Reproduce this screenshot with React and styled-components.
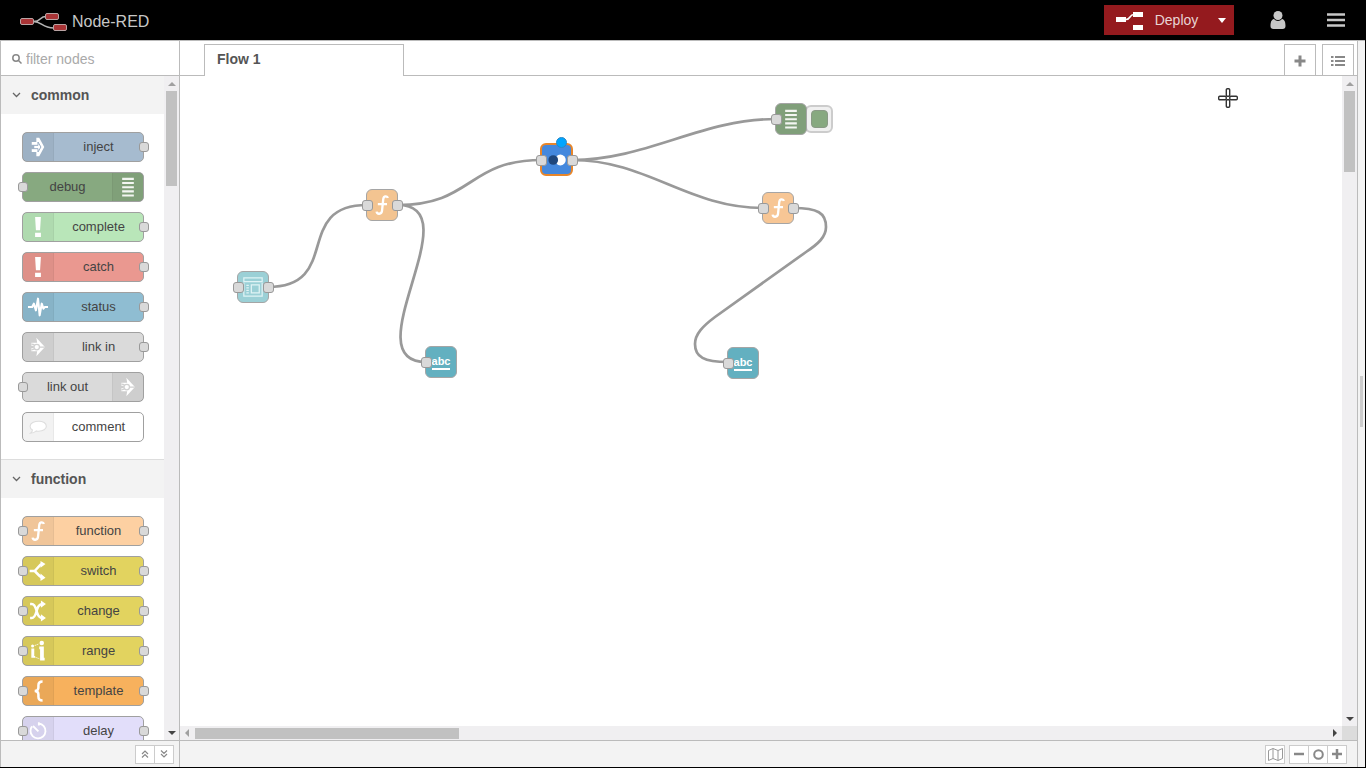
import React from 'react';
import styled, { createGlobalStyle } from 'styled-components';

const GlobalStyle = createGlobalStyle`
  *, *::before, *::after { box-sizing: border-box; }
  body { margin: 0; background: #000; }
  body, button, input { font-family: "Liberation Sans", Arial, Helvetica, sans-serif; font-size: 14px; color: #555; }
  button { padding: 0; cursor: pointer; }
  h1, h2 { margin: 0; }
  svg { display: block; }
`;

const line = '#bbb';

const Page = styled.div`
  display: flex;
  flex-direction: column;
  height: 100vh;
  padding: 0 1px 1px 0;
  background: #000;
`;

const Header = styled.header`
  flex: none;
  display: flex;
  align-items: center;
  height: 40px;
  padding: 0 19px 0 20px;
  background: #000;
`;

const Brand = styled.h1`
  display: flex;
  align-items: center;
  gap: 4px;
  flex: 1;
  padding-top: 4px;
  font-size: 16px;
  line-height: 20px;
  font-weight: normal;
  color: #c7c7c7;
`;

const DeployGroup = styled.div`
  display: flex;
  height: 30px;
  margin-right: 34px;
  background: #941a1e;
`;

const DeployButton = styled.button`
  display: flex;
  align-items: center;
  justify-content: center;
  gap: 11px;
  width: ${(p) => (p.$caret ? 24 : 106)}px;
  border: 0;
  background: transparent;
  color: #e8d4d4;
`;

const HeaderButton = styled.button`
  display: grid;
  place-items: center;
  width: 20px;
  height: 30px;
  margin-left: ${(p) => (p.$spaced ? 38 : 0)}px;
  border: 0;
  background: transparent;
`;

const Main = styled.div`
  flex: 1;
  display: flex;
  min-height: 0;
  background: #f3f3f3;
  border-top: 1px solid ${line};
`;

const Palette = styled.aside`
  flex: none;
  display: flex;
  flex-direction: column;
  width: 180px;
  border: solid ${line};
  border-width: 0 1px;
  background: #fff;
`;

const Search = styled.label`
  flex: none;
  display: flex;
  align-items: center;
  gap: 4px;
  height: 35px;
  padding: 2px 0 0 11px;
  border-bottom: 1px solid ${line};

  input {
    width: 130px;
    height: 20px;
    padding: 0;
    border: 0;
    outline: 0;
    background: transparent;
  }
  input::placeholder { color: #aaa; opacity: 1; }
`;

const PaletteBody = styled.div`
  flex: 1;
  display: flex;
  min-height: 0;
`;

const PaletteList = styled.div`
  flex: 1;
  overflow: hidden;
`;

const Category = styled.section`
  border-bottom: 1px solid #ddd;
`;

const CategoryHeader = styled.h2`
  display: flex;
  align-items: center;
  gap: 10px;
  height: 38px;
  padding-left: 11px;
  background: #f3f3f3;
  font-size: 14px;
  line-height: 20px;
`;

const NodeList = styled.div`
  display: flex;
  flex-direction: column;
  gap: 10px;
  padding: 18px 20px 17px 21px;
`;

const PaletteNode = styled.div`
  position: relative;
  display: flex;
  flex-direction: ${(p) => (p.$flip ? 'row-reverse' : 'row')};
  height: 30px;
  border: 1px solid #a0a0a0;
  border-radius: 5px;
  background: ${(p) => p.$color};
  color: #444;
  font-size: 13px;
  line-height: 28px;
  text-align: center;
`;

const IconCell = styled.span`
  display: grid;
  place-items: center;
  width: 31px;
  background: rgba(0, 0, 0, 0.05);
  border: solid rgba(0, 0, 0, 0.04);
  border-width: ${(p) => (p.$flip ? '0 0 0 1px' : '0 1px 0 0')};
`;

const NodeLabel = styled.span`
  flex: 1;
`;

const Port = styled.i`
  position: absolute;
  top: calc(50% - 5px);
  ${(p) => (p.$side === 'left' ? 'left: -5px' : 'right: -6px')};
  width: 10px;
  height: 10px;
  border: 1px solid #999;
  border-radius: 3px;
  background: #d9d9d9;
`;

const Footer = styled.footer`
  flex: none;
  display: flex;
  align-items: center;
  justify-content: flex-end;
  gap: 4px;
  height: 27px;
  padding-right: ${(p) => (p.$wide ? 10 : 5)}px;
  border-top: 1px solid ${line};
  background: #f3f3f3;
`;

const ButtonGroup = styled.div`
  display: flex;
  border: 1px solid #ccc;
  background: #fff;
  button + button { border-left: 1px solid #ccc; width: 19px; }
`;

const SmallButton = styled.button`
  display: grid;
  place-items: center;
  width: 18px;
  height: 17px;
  border: 0;
  background: #fff;
`;

const Workspace = styled.main`
  flex: 1;
  display: flex;
  flex-direction: column;
  min-width: 0;
  background: #fff;
  border-right: 1px solid ${line};
`;

const TabBar = styled.nav`
  flex: none;
  display: flex;
  align-items: flex-end;
  height: 35px;
  padding: 0 3px 0 24px;
  border-bottom: 1px solid ${line};
`;

const Tab = styled.button`
  width: 200px;
  height: 32px;
  margin: 0 auto -1px 0;
  padding: 0 0 4px 12px;
  border: 1px solid ${line};
  border-bottom: 0;
  background: #fff;
  font-weight: bold;
  text-align: left;
`;

const TabButton = styled.button`
  display: grid;
  place-items: center;
  width: 32px;
  height: 31px;
  margin-left: 6px;
  padding-top: 2px;
  border: 1px solid ${line};
  border-bottom: 0;
  background: #fff;
`;

const CanvasRow = styled.div`
  flex: 1;
  display: flex;
  min-height: 0;
`;

const Canvas = styled.div`
  position: relative;
  flex: 1;
  overflow: hidden;
  background: #fff;
`;

const Wires = styled.svg`
  position: absolute;
  inset: 0;
  width: 100%;
  height: 100%;
  fill: none;
  stroke: #999;
  stroke-width: 2.7;
`;

const FlowNode = styled.div`
  position: absolute;
  left: ${(p) => p.$x}px;
  top: ${(p) => p.$y}px;
  display: grid;
  place-items: center;
  width: ${(p) => (p.$selected ? 33 : 32)}px;
  height: ${(p) => (p.$selected ? 33 : 32)}px;
  border: ${(p) => (p.$selected ? '2px solid #e8862a' : '1px solid #a5a5a5')};
  border-radius: 6px;
  background: ${(p) => p.$color};

  ${Port} {
    width: 11px;
    height: 11px;
    ${(p) => p.$selected && 'margin: 0 -1px;'}
  }
`;

const ChangedDot = styled.i`
  position: absolute;
  top: -8px;
  right: 4px;
  width: 11px;
  height: 11px;
  border: 1px solid #2b87c4;
  border-radius: 50%;
  background: #00a5ff;
`;

const DebugToggle = styled.button`
  position: absolute;
  left: 625px;
  top: 29px;
  display: grid;
  place-items: center;
  width: 28px;
  height: 28px;
  border: 2px solid #ccc;
  border-radius: 6px;
  background: #f0f0f0;

  &::before {
    content: "";
    width: 17px;
    height: 18px;
    border: 1px solid #8a9a86;
    border-radius: 4px;
    background: #87a980;
  }
`;

const AbcIcon = styled.span`
  padding-bottom: 1px;
  border-bottom: 2px solid #fff;
  color: #fff;
  font-size: 11px;
  line-height: 12px;
  font-weight: bold;
`;

const Cursor = styled.svg`
  position: absolute;
  top: 12px;
  right: 104px;
`;

const VScroll = styled.div`
  flex: none;
  display: flex;
  flex-direction: column;
  align-items: center;
  justify-content: space-between;
  width: 15px;
  padding: 6px 0 5px;
  background: #f0eff1;
`;

const VTrack = styled.div`
  flex: 1;
  width: 11px;
  margin: 5px 0;
`;

const Thumb = styled.div`
  width: ${(p) => p.$w};
  height: ${(p) => p.$h};
  background: #c1c1c1;
`;

const HRow = styled.div`
  flex: none;
  display: flex;
  height: 14px;
`;

const HScroll = styled.div`
  flex: 1;
  display: flex;
  align-items: center;
  padding: 0 5px;
  background: #f0eff1;
`;

const HTrack = styled.div`
  flex: 1;
  margin: 0 6px;
`;

const Corner = styled.div`
  width: 15px;
  background: #dcdcdc;
`;

const arrowSides = {
  up: 'border-top: 0; border-bottom',
  down: 'border-bottom: 0; border-top',
  left: 'border-left: 0; border-right',
  right: 'border-right: 0; border-left',
};

const Arrow = styled.i`
  width: 0;
  height: 0;
  border: 4px solid transparent;
  ${(p) => arrowSides[p.$dir]}: 4px solid ${(p) => (p.$active ? '#444' : '#a0a0a0')};
`;

const Separator = styled.div`
  flex: none;
  display: grid;
  place-items: center;
  width: 7px;
  padding-bottom: 6px;

  &::before {
    content: "";
    width: 3px;
    height: 51px;
    background: #ccc;
  }
`;

const icons = {
  inject: (
    <>
      <path d="M4.500 6h5.500V1h3.500l6 11-6 11H10v-5H4.500v-4h3V10h-3z" />
      <path d="M4.500 10h7.500V6l3.500 6-3.500 6v-4H4.500" fill="none" stroke="#98adc4" strokeWidth="1.200" />
    </>
  ),
  bars: <path d="M5 1h14v2.500H5zm0 5h14v2.500H5zm0 5h14v2.500H5zm0 5h14v2.500H5zm0 5h14v2.500H5z" fillOpacity="0.9" />,
  exclaim: <path d="M8.500 0h7l-1 16h-5zM8.500 19h7v5h-7z" />,
  status: <path d="M0 12h5l2-4 2.500 8L12 2l2 20 2.500-14 2 6 1.500-2h4" fill="none" stroke="#fff" strokeWidth="2.500" strokeLinejoin="round" />,
  link: (
    <>
      <path d="M10 1l9.500 10q.7 1 0 2L10 23l1-6H4v-3.500h3v-3H4V7h7z" />
      <path d="M4 8.500c2 0 3 .5 4 1.500M4 15.500c2 0 3-.5 4-1.500M13.500 12h6" fill="none" stroke="#d0d0d0" strokeWidth="1.500" />
      <circle cx="10.500" cy="12" r="3.300" fill="#fff" stroke="#d0d0d0" strokeWidth="1.500" />
    </>
  ),
  comment: <path d="M13 5c5 0 9 2.500 9 6s-4 6-9 6c-1 0-2 0-3-.3C8 18.500 6 19.500 3 19.500c1.500-1 2.300-2.400 2.300-4C3.500 14.500 2.500 13 2.500 11c0-3.500 5-6 10.500-6z" fill="#fff" stroke="#ddd" strokeWidth="1.300" />,
  fn: <path d="M19 3.500c-.5-2.500-5-3-5.500 1.500L12 19c-.4 4.500-6 4.500-6.500 1M7 11h11" fill="none" stroke="#fff" strokeWidth="2.800" />,
  switch: (
    <>
      <path d="M2 12h6l7-7.500c1-.8 1.500-1 3-1M8 12l6 6c1.500 1.500 2 2 4 2" fill="none" stroke="#fff" strokeWidth="3" />
      <path d="M15 0l6 3.500-6 4.500zM15 15l6 5-6 4z" />
    </>
  ),
  change: (
    <>
      <path d="M2.500 3.500h2C12 3.500 8 20.500 18 20.500M2.500 20.500h2C12 20.500 8 3.500 18 3.500" fill="none" stroke="#fff" strokeWidth="3" />
      <path d="M15.500-.5l6 4-6 4.500zM15.500 16l6 4.500-6 4z" />
    </>
  ),
  range: (
    <>
      <circle cx="5.500" cy="6" r="1.800" />
      <circle cx="16.500" cy="2.500" r="2.700" />
      <path d="M4 9h3.500v9h1v2H4zM13.500 6.500H19V20h1v3.500h-5.500V10h-1z" />
      <path d="M8 5.500l5-2M9 19.500l5 2" stroke="#fff" strokeDasharray="1.500 1" strokeWidth="1.200" />
    </>
  ),
  template: <path d="M17.500 0.500C13.500.5 12.500 2 12.500 5v2.500c0 3-1 4.500-4.500 4.500 3.500 0 4.500 1.500 4.500 4.500V19c0 3 1 4.500 5 4.500" fill="none" stroke="#fff" strokeWidth="3" />,
  delay: <path d="M13 3a9 9 0 1 1-10 9c0-2 .6-4 1.800-5.500M6 6l6.500 6.500M13 1.500v4" fill="none" stroke="#fff" strokeWidth="2.200" />,
  uiTemplate: (
    <g fill="none" stroke="#e0f3f5" strokeWidth="1.500">
      <path d="M1 1h22v4.500H1zM1 7v16h22V7M10 9.500h9.500V19H10z" />
      <path d="M4 10h3M4 13h3M4 16h3M4 19h3" />
    </g>
  ),
  toggle: (
    <>
      <circle cx="16" cy="12" r="6.500" />
      <circle cx="7.500" cy="12" r="5.800" fill="#1f477c" />
    </>
  ),
};

const NodeIcon = ({ name }) => (
  <svg width="20" height="20" viewBox="0 0 24 24" fill="#fff" overflow="visible" aria-hidden="true">{icons[name]}</svg>
);

const categories = [
  {
    name: 'common',
    nodes: [
      { label: 'inject', color: '#a6bbcf', icon: 'inject', out: true },
      { label: 'debug', color: '#87a980', icon: 'bars', in: true, flip: true },
      { label: 'complete', color: '#b9e6b9', icon: 'exclaim', out: true },
      { label: 'catch', color: '#ea9890', icon: 'exclaim', out: true },
      { label: 'status', color: '#8fbdd2', icon: 'status', out: true },
      { label: 'link in', color: '#dadada', icon: 'link', out: true },
      { label: 'link out', color: '#dadada', icon: 'link', in: true, flip: true },
      { label: 'comment', color: '#fff', icon: 'comment' },
    ],
  },
  {
    name: 'function',
    nodes: [
      { label: 'function', color: '#fdd0a2', icon: 'fn', in: true, out: true },
      { label: 'switch', color: '#e2d35f', icon: 'switch', in: true, out: true },
      { label: 'change', color: '#e2d35f', icon: 'change', in: true, out: true },
      { label: 'range', color: '#e2d35f', icon: 'range', in: true, out: true },
      { label: 'template', color: '#f7b15d', icon: 'template', in: true, out: true },
      { label: 'delay', color: '#e2defa', icon: 'delay', in: true, out: true },
    ],
  },
];

const flowNodes = [
  { x: 57, y: 195, color: '#9bd0d6', icon: 'uiTemplate', in: true, out: true },
  { x: 186, y: 113, color: '#f3c491', icon: 'fn', in: true, out: true },
  { x: 360, y: 67, color: '#4488dd', icon: 'toggle', in: true, out: true, selected: true },
  { x: 595, y: 27, color: '#809f7a', icon: 'bars', in: true },
  { x: 582, y: 116, color: '#f7c695', icon: 'fn', in: true, out: true },
  { x: 245, y: 270, color: '#63b0c0', text: 'abc', in: true },
  { x: 547, y: 271, color: '#63b0c0', text: 'abc', in: true },
];

const wires = [
  'M88 211C163 211 112 129 187 129',
  'M218 129C293 129 287 84 362 84',
  'M218 129C293 129 171 286 246 286',
  'M392 84C467 84 521 43 596 43',
  'M392 84C467 84 508 132 583 132',
  'M613 132C638 132 646 137 646 151C646 161 638 168 626 176L535 241C523 250 515 258 515 268C515 281 524 286 548 286',
];

function VerticalScrollbar({ thumb }) {
  return (
    <VScroll>
      <Arrow $dir="up" />
      <VTrack><Thumb $w="100%" $h={thumb} /></VTrack>
      <Arrow $dir="down" $active />
    </VScroll>
  );
}

export default function App() {
  return (
    <Page>
      <GlobalStyle />
      <Header>
        <Brand>
          <svg width="48" height="20" viewBox="0 0 48 20" aria-hidden="true">
            <path d="M13 9.500c9 0 6-5 13-5M13 9.500c10 0 8 6.500 21 6.500" fill="none" stroke="#b5b5b5" strokeWidth="1.500" />
            <g fill="#a93436" stroke="#b9a4a4">
              <rect x="0.500" y="6.500" width="13" height="6" rx="1.500" />
              <rect x="25.500" y="1.500" width="13" height="6" rx="1.500" />
              <rect x="33.500" y="12.500" width="13" height="6" rx="1.500" />
            </g>
          </svg>
          <span>Node-RED</span>
        </Brand>
        <DeployGroup>
          <DeployButton>
            <svg width="28" height="20" viewBox="0 0 28 20" fill="#fff" aria-hidden="true">
              <path d="M0 7h10v5H0zM17 2h10v5H17zM17 15h10v5H17z" />
              <path d="M10 9.500c5 0 3-5 8-5" fill="none" stroke="#fff" strokeWidth="1.500" />
            </svg>
            <span>Deploy</span>
          </DeployButton>
          <DeployButton $caret aria-label="Deploy options">
            <svg width="8" height="5" viewBox="0 0 8 5"><path d="M0 0h8L4 5z" fill="#fff" /></svg>
          </DeployButton>
        </DeployGroup>
        <HeaderButton aria-label="User">
          <svg width="16" height="18" viewBox="0 0 16 18" fill="#c7c7c7">
            <circle cx="8" cy="4.500" r="4.500" />
            <path d="M4 8c2 2.500 6 2.500 8 0 3 .5 3.500 4 3.500 7 0 2-1 3-3 3h-9c-2 0-3-1-3-3C.5 12 1 8.500 4 8z" />
          </svg>
        </HeaderButton>
        <HeaderButton $spaced aria-label="Menu">
          <svg width="18" height="14" viewBox="0 0 18 14"><path d="M0 1.500h18M0 7h18M0 12.500h18" stroke="#c7c7c7" strokeWidth="2.300" /></svg>
        </HeaderButton>
      </Header>

      <Main>
        <Palette>
          <Search>
            <svg width="10" height="10" viewBox="0 0 10 10" fill="none" stroke="#888" strokeWidth="1.500" aria-hidden="true">
              <circle cx="4" cy="4" r="3.200" /><path d="M6.500 6.500L9.500 9.500" />
            </svg>
            <input type="text" placeholder="filter nodes" aria-label="filter nodes" />
          </Search>
          <PaletteBody>
            <PaletteList>
              {categories.map((c) => (
                <Category key={c.name}>
                  <CategoryHeader>
                    <svg width="9" height="6" viewBox="0 0 9 6" fill="none" stroke="#666" strokeWidth="1.300" aria-hidden="true"><path d="M1 1l3.500 3.500L8 1" /></svg>
                    {c.name}
                  </CategoryHeader>
                  <NodeList>
                    {c.nodes.map((n) => (
                      <PaletteNode key={n.label} $color={n.color} $flip={n.flip}>
                        <IconCell $flip={n.flip}><NodeIcon name={n.icon} /></IconCell>
                        <NodeLabel>{n.label}</NodeLabel>
                        {n.in && <Port $side="left" />}
                        {n.out && <Port $side="right" />}
                      </PaletteNode>
                    ))}
                  </NodeList>
                </Category>
              ))}
            </PaletteList>
            <VerticalScrollbar thumb="15%" />
          </PaletteBody>
          <Footer>
            <ButtonGroup>
              <SmallButton aria-label="Collapse all">
                <svg width="8" height="8" viewBox="0 0 8 8" fill="none" stroke="#888" strokeWidth="1.200"><path d="M1 4l3-3 3 3M1 7.500l3-3 3 3" /></svg>
              </SmallButton>
              <SmallButton aria-label="Expand all">
                <svg width="8" height="8" viewBox="0 0 8 8" fill="none" stroke="#888" strokeWidth="1.200"><path d="M1 .5l3 3 3-3M1 4l3 3 3-3" /></svg>
              </SmallButton>
            </ButtonGroup>
          </Footer>
        </Palette>

        <Workspace>
          <TabBar>
            <Tab>Flow 1</Tab>
            <TabButton aria-label="Add flow">
              <svg width="12" height="12" viewBox="0 0 12 12"><path d="M6 .5v11M.5 6h11" stroke="#888" strokeWidth="3" /></svg>
            </TabButton>
            <TabButton aria-label="List flows">
              <svg width="14" height="12" viewBox="0 0 14 12"><path d="M0 2h2.500M4 2h10M0 6h2.500M4 6h10M0 10h2.500M4 10h10" stroke="#888" strokeWidth="2" /></svg>
            </TabButton>
          </TabBar>
          <CanvasRow>
            <Canvas>
              <Wires aria-hidden="true">{wires.map((d) => <path key={d} d={d} />)}</Wires>
              <DebugToggle aria-label="Toggle debug output" />
              {flowNodes.map((n) => (
                <FlowNode key={`${n.x}-${n.y}`} $x={n.x} $y={n.y} $color={n.color} $selected={n.selected}>
                  {n.text ? <AbcIcon>{n.text}</AbcIcon> : <NodeIcon name={n.icon} />}
                  {n.in && <Port $side="left" />}
                  {n.out && <Port $side="right" />}
                  {n.selected && <ChangedDot />}
                </FlowNode>
              ))}
              <Cursor width="20" height="20" viewBox="0 0 20 20" fill="#fff" stroke="#333" strokeWidth="1.400" aria-hidden="true">
                <rect x="8.300" y="0.700" width="3.400" height="7.500" rx="1" />
                <rect x="8.300" y="11.800" width="3.400" height="7.500" rx="1" />
                <rect x="0.700" y="8.300" width="7.500" height="3.400" rx="1" />
                <rect x="11.800" y="8.300" width="7.500" height="3.400" rx="1" />
              </Cursor>
            </Canvas>
            <VerticalScrollbar thumb="13%" />
          </CanvasRow>
          <HRow>
            <HScroll>
              <Arrow $dir="left" />
              <HTrack><Thumb $w="23.3%" $h="11px" /></HTrack>
              <Arrow $dir="right" $active />
            </HScroll>
            <Corner />
          </HRow>
          <Footer $wide>
            <ButtonGroup>
              <SmallButton aria-label="Toggle navigator">
                <svg width="15" height="13" viewBox="0 0 15 13" fill="none" stroke="#999"><path d="M.5 2.500l4.500-2 5 2 4.500-2v10l-4.500 2-5-2-4.500 2zM5 .5v10M10 2.500v10" /></svg>
              </SmallButton>
            </ButtonGroup>
            <ButtonGroup>
              <SmallButton aria-label="Zoom out">
                <svg width="10" height="10" viewBox="0 0 10 10"><path d="M0 5h10" stroke="#888" strokeWidth="2.500" /></svg>
              </SmallButton>
              <SmallButton aria-label="Reset zoom">
                <svg width="11" height="11" viewBox="0 0 11 11"><circle cx="5.500" cy="5.500" r="4.300" fill="none" stroke="#888" strokeWidth="2" /></svg>
              </SmallButton>
              <SmallButton aria-label="Zoom in">
                <svg width="10" height="10" viewBox="0 0 10 10"><path d="M0 5h10M5 0v10" stroke="#888" strokeWidth="2.500" /></svg>
              </SmallButton>
            </ButtonGroup>
          </Footer>
        </Workspace>
        <Separator />
      </Main>
    </Page>
  );
}
